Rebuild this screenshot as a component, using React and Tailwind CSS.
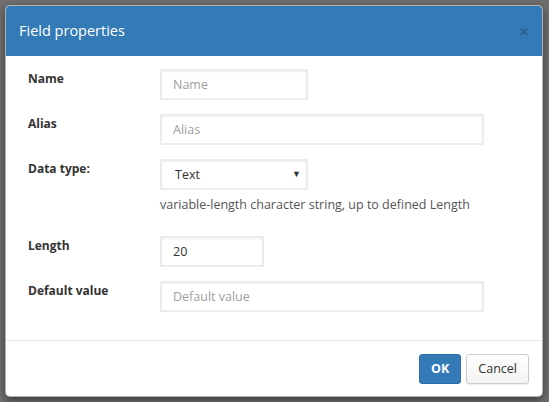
import React from 'react';

const font = { fontFamily: '"Open Sans", "Liberation Sans", sans-serif' };

const inputCls =
  'h-[31px] border-2 border-[#ececec] bg-white px-[11px] text-[12.5px] text-[#333] placeholder:text-[#a0a0a0] shadow-[inset_0_1px_2px_rgba(0,0,0,0.06)] outline-none';

const Row = ({ label, children, className = '' }) => (
  <div className={`flex ${className}`}>
    <label className="w-[132px] shrink-0 pt-[1px] text-[12px] font-bold leading-[18px] text-[#333]">{label}</label>
    <div className="flex-1">{children}</div>
  </div>
);

export default function App() {
  return (
    <div className="h-[402px] w-[549px] bg-[#6f6f6f] p-[5px]" style={font}>
      <div className="flex h-[392px] w-[538px] flex-col overflow-hidden rounded-[5px] border border-black/30 bg-white shadow-[0_3px_9px_rgba(0,0,0,0.5)]">
        {/* Header */}
        <div className="flex h-[50px] shrink-0 items-center justify-between bg-[#337ab7] pl-[13px] pr-[13px]">
          <h4 className="text-[14.5px] text-white">Field properties</h4>
          <button className="text-[18px] font-bold leading-none text-black/20">×</button>
        </div>

        {/* Body */}
        <div className="flex flex-1 flex-col gap-[14px] pl-[22px] pr-[58px] pt-[13px]">
          <Row label="Name">
            <input className={`${inputCls} w-[148px]`} placeholder="Name" />
          </Row>
          <Row label="Alias">
            <input className={`${inputCls} w-[324px]`} placeholder="Alias" />
          </Row>
          <Row label="Data type:">
            <div className="relative h-[31px] w-[148px] border-2 border-[#ececec] bg-white shadow-[inset_0_1px_2px_rgba(0,0,0,0.06)]">
              <span className="absolute left-[13px] top-[5px] text-[12.5px] text-[#333]">Text</span>
              <span className="absolute right-[5px] top-[6px] text-[9px] text-[#333]">▼</span>
            </div>
            <p className="mt-[6px] text-[12.5px] leading-[18px] text-[#555]">variable-length character string, up to defined Length</p>
          </Row>
          <Row label="Length" className="mt-[8px]">
            <input className={`${inputCls} w-[104px]`} defaultValue="20" />
          </Row>
          <Row label="Default value">
            <input className={`${inputCls} w-[324px]`} placeholder="Default value" />
          </Row>
        </div>

        {/* Footer */}
        <div className="flex h-[56px] shrink-0 items-start justify-end gap-[5px] border-t border-[#e5e5e5] pr-[13px] pt-[13px]">
          <button className="h-[30px] rounded-[3px] border border-[#2e6da4] bg-[#337ab7] px-[11px] text-[12.5px] font-bold text-white">
            OK
          </button>
          <button className="h-[30px] rounded-[3px] border border-[#ccc] bg-gradient-to-b from-white to-[#f3f3f3] px-[11px] text-[12.5px] text-[#333] shadow-[0_1px_1px_rgba(0,0,0,0.08)]">
            Cancel
          </button>
        </div>
      </div>
    </div>
  );
}
